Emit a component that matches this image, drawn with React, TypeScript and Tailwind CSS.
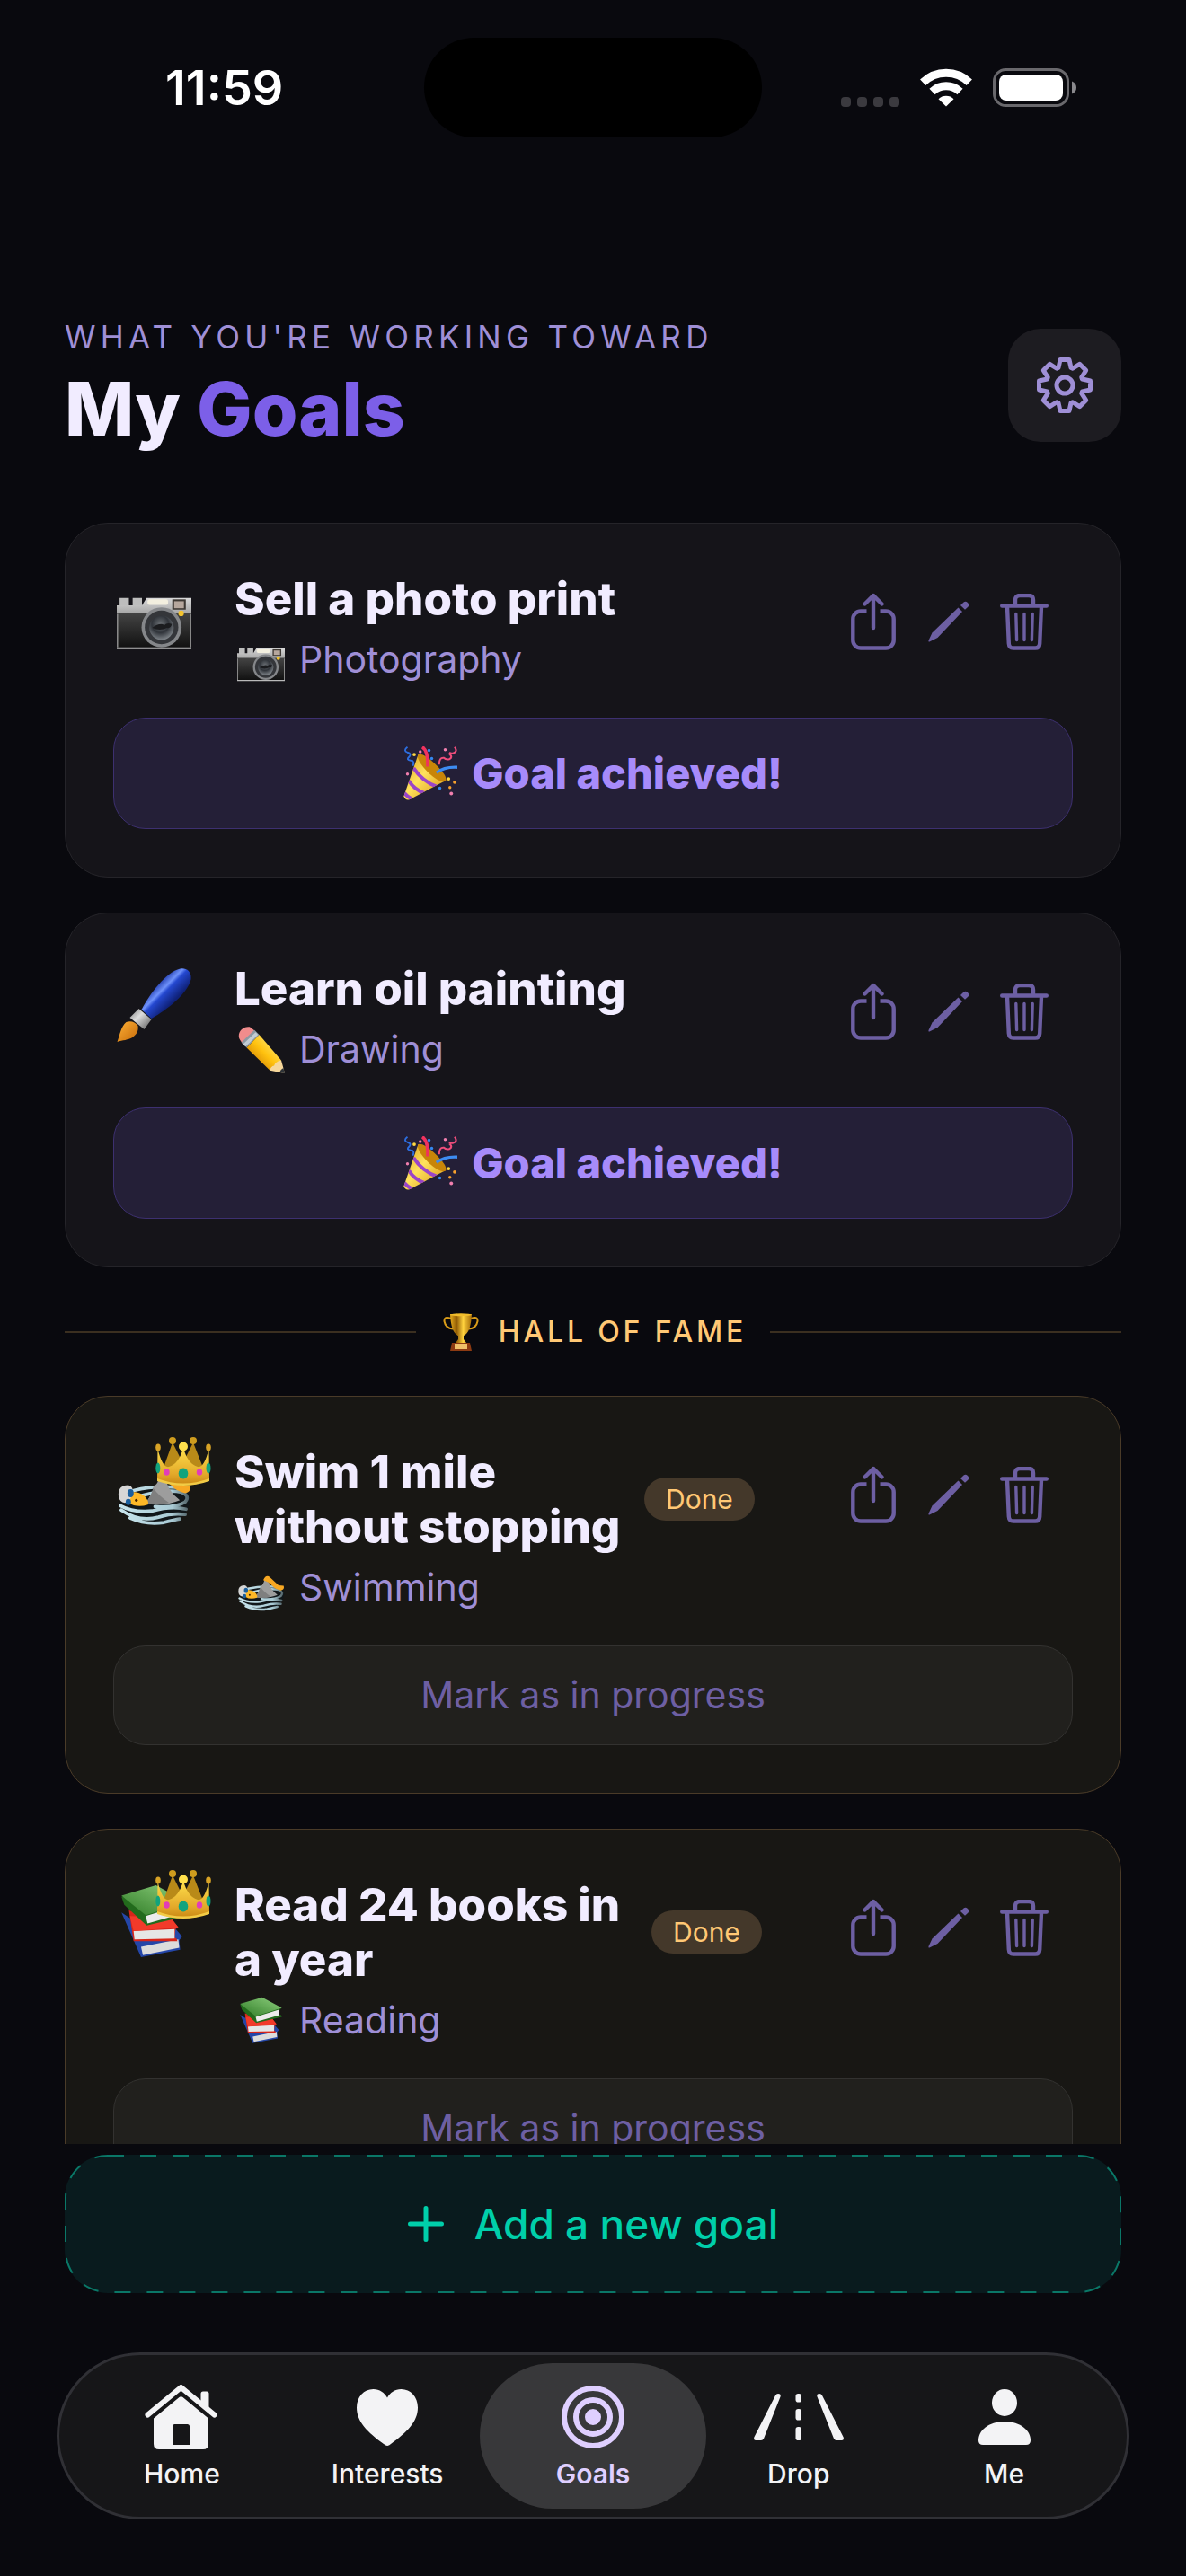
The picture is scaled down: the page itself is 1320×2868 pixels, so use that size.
import React from "react";

type IconProps = { className?: string };

const GEAR_PATH =
  Array.from({ length: 8 }, (_, k) => {
    const a = (k * Math.PI) / 4;
    return [
      [-7, -19.5],
      [-5, -28.5],
      [5, -28.5],
      [7, -19.5],
    ]
      .map(([x, y]) => {
        const px = x * Math.cos(a) - y * Math.sin(a);
        const py = x * Math.sin(a) + y * Math.cos(a);
        return `${px.toFixed(2)} ${py.toFixed(2)}`;
      })
      .join("L");
  })
    .map((p, i) => (i === 0 ? "M" : "L") + p)
    .join("") + "Z";

function GearIcon({ className }: IconProps) {
  return (
    <svg viewBox="-32 -32 64 64" className={className} fill="none" stroke="currentColor" strokeWidth="5" strokeLinejoin="round" aria-hidden="true">
      <path d={GEAR_PATH} />
      <circle r="9" />
    </svg>
  );
}

function ShareIcon({ className }: IconProps) {
  return (
    <svg viewBox="0 0 50 64" className={className} fill="none" stroke="currentColor" strokeWidth="4.4" strokeLinecap="round" strokeLinejoin="round" aria-hidden="true">
      <path d="M17.5 20.5H11a8.7 8.7 0 0 0-8.7 8.7v23.6A8.7 8.7 0 0 0 11 61.500h28a8.700 8.700 0 0 0 8.700-8.700V29.200a8.700 8.700 0 0 0-8.700-8.700h-6.500" strokeLinecap="butt" />
      <path d="M25 3v36M15.500 12.500 25 3l9.500 9.500" />
    </svg>
  );
}

function PencilIcon({ className }: IconProps) {
  return (
    <svg viewBox="0 0 46 46" className={className} fill="currentColor" aria-hidden="true">
      <path d="M33.500 7.500 38 12 10.500 41 1.500 45.500Q0 46 0.500 44L4.500 35.500Z" />
      <path d="M36 5 38.500 2.500Q41-.5 44 2q2.500 2.800 0 5L41 9.800Z" />
    </svg>
  );
}

function TrashIcon({ className }: IconProps) {
  return (
    <svg viewBox="0 0 54 63" className={className} fill="none" stroke="currentColor" strokeWidth="4.400" strokeLinecap="round" strokeLinejoin="round" aria-hidden="true">
      <path d="M2.200 13.500h49.600M17 12.500V7q0-5 5-5h10q5 0 5 5v5.500M8 14.500l1.800 41q.3 5 5 5h24.400q4.700 0 5-5L46 14.500" />
      <path d="M17.800 22.500l.8 29M27 22.500v29M36.200 22.500l-.8 29" strokeWidth="3.400" />
    </svg>
  );
}

function CameraEmoji({ className }: IconProps) {
  return (
    <svg viewBox="0 0 80 80" className={className} aria-hidden="true">
      <defs>
        <linearGradient id="cam-top" x1="0" y1="0" x2="0" y2="1">
          <stop offset="0" stopColor="#d9d9d9" />
          <stop offset="1" stopColor="#a2a2a2" />
        </linearGradient>
        <linearGradient id="cam-body" x1="0" y1="0" x2="0" y2="1">
          <stop offset="0" stopColor="#444" />
          <stop offset="1" stopColor="#111" />
        </linearGradient>
        <radialGradient id="cam-lens" cx=".45" cy=".35" r=".7">
          <stop offset="0" stopColor="#6b7075" />
          <stop offset=".5" stopColor="#30343a" />
          <stop offset="1" stopColor="#8b9196" />
        </radialGradient>
      </defs>
      <path d="M3 21h10v9H3zM17 21h10v9H17z" fill="#bdbdbd" />
      <path d="M0 29h27l5-8h48v18H0z" fill="url(#cam-top)" />
      <path d="M0 37h80v37H0z" fill="url(#cam-body)" />
      <path d="M0 74h80v2H0z" fill="#b9b9b9" />
      <path d="M0 38h1.500v36H0zM78.500 38H80v36h-1.500z" fill="#888" />
      <rect x="33" y="22.500" width="22" height="6" rx="2" fill="#f3efdf" />
      <rect x="59.500" y="22.500" width="14.500" height="11" fill="#3d3833" />
      <rect x="61.500" y="24.500" width="10.500" height="7.500" fill="#b6a79d" />
      <circle cx="48" cy="52.500" r="21.500" fill="#85878a" />
      <circle cx="48" cy="52.500" r="18" fill="#34363a" />
      <circle cx="48" cy="53" r="13" fill="url(#cam-lens)" />
      <path d="M38 53q8-6 13-3 3-3 8-1-1 5-5 4-8 4-16 0z" fill="#1b1c1f" />
      <circle cx="69" cy="37.500" r="3" fill="#f3c32e" />
    </svg>
  );
}

function BrushEmoji({ className }: IconProps) {
  return (
    <svg viewBox="0 0 82 83" className={className} aria-hidden="true">
      <defs>
        <linearGradient id="br-handle" x1=".3" y1=".3" x2=".65" y2=".65">
          <stop offset="0" stopColor="#1a35a8" />
          <stop offset=".35" stopColor="#6f92fb" />
          <stop offset=".5" stopColor="#2448d0" />
          <stop offset="1" stopColor="#0f2178" />
        </linearGradient>
        <linearGradient id="br-metal" x1="0" y1="0" x2="1" y2="1">
          <stop offset="0" stopColor="#777" />
          <stop offset=".4" stopColor="#ddd" />
          <stop offset="1" stopColor="#555" />
        </linearGradient>
        <linearGradient id="br-tip" x1="0" y1="0" x2="1" y2="1">
          <stop offset="0" stopColor="#ffb035" />
          <stop offset="1" stopColor="#c46a0a" />
        </linearGradient>
      </defs>
      <path d="M27 46C36 29 54 4 70 .5c8-1 13 4 12 12C78 28 56 46 38 56Z" fill="url(#br-handle)" />
      <path d="M24 45 38 57 30 68 14 55Z" fill="url(#br-metal)" />
      <path d="M0 82c3-8 4-17 10-22 5-2 10 0 13 4 1 6-2 10-6 13-5 3-11 3-17 5Z" fill="url(#br-tip)" />
    </svg>
  );
}

function PencilEmoji({ className }: IconProps) {
  return (
    <svg viewBox="0 0 80 80" className={className} aria-hidden="true">
      <defs>
        <linearGradient id="pc-body" x1=".7" y1=".3" x2=".3" y2=".7">
          <stop offset="0" stopColor="#ffd94a" />
          <stop offset=".5" stopColor="#ffc20f" />
          <stop offset="1" stopColor="#e39a08" />
        </linearGradient>
      </defs>
      <path d="M5 24C-2 14 8 0 21 2l8 6L9 30Z" fill="#f08c8c" />
      <path d="M29 7 37 15 16 37 7 28Z" fill="#8d99a3" />
      <path d="M31 11 35 15 14 35 10 31Z" fill="#c3ccd3" />
      <path d="M37 15 74 58 55 75 16 37Z" fill="url(#pc-body)" />
      <path d="M74 58 80 80 55 75Q56 68 62 67 64 60 74 58Z" fill="#f6d79b" />
      <path d="M77.500 71 80 80 71 78.500Q73 73 77.500 71Z" fill="#2e3338" />
    </svg>
  );
}

function PartyEmoji({ className }: IconProps) {
  return (
    <svg viewBox="0 0 80 80" className={className} aria-hidden="true">
      <defs>
        <linearGradient id="pt-cone" x1="0" y1="0" x2="1" y2="1">
          <stop offset="0" stopColor="#d79a12" />
          <stop offset=".45" stopColor="#ffe25e" />
          <stop offset="1" stopColor="#d48f0c" />
        </linearGradient>
        <clipPath id="pt-clip">
          <path d="M22 12 62 51 9 79Q3 81 .5 74Z" />
        </clipPath>
      </defs>
      <path d="M22 12 62 51 9 79Q3 81 .5 74Z" fill="url(#pt-cone)" />
      <g clipPath="url(#pt-clip)" stroke="#9b45c9" strokeWidth="5.500" fill="none">
        <path d="M15 32Q28 52 50 60M8 51Q16 64 32 70M0 68Q6 75 14 79" />
      </g>
      <path d="M22 12Q30 10 46 25 66 44 63 51 56 56 38 40 18 20 22 12Z" fill="#c88508" />
      <path d="M28 1q9 6 8 29" stroke="#f0325f" strokeWidth="5" fill="none" />
      <path d="M49 39q12-9 31-8" stroke="#3d8cf0" strokeWidth="4.500" fill="none" />
      <path d="M6 1q-7 5 0 8 7 2 2 7-4 4 3 5 6 0 3 8" stroke="#2d6ee0" strokeWidth="2.500" fill="none" />
      <path d="M76 1q5 7-2 9-4 1-6-1M68 11q6 5 0 8-5 1-8-2-7-1-7 10" stroke="#ef4d7b" strokeWidth="2.800" fill="none" />
      <g fill="#ffd840"><circle cx="16" cy="12" r="2.500" /><circle cx="67" cy="48" r="2.500" /></g>
      <g fill="#3486ef"><circle cx="38" cy="6" r="2.300" /><circle cx="42" cy="18" r="2.300" /><circle cx="54" cy="62" r="2.300" /></g>
      <g fill="#f8a12d"><circle cx="76" cy="53" r="2.500" /><circle cx="69" cy="61" r="2.200" /></g>
      <g fill="#f17fae"><circle cx="25" cy="8" r="2.300" /><circle cx="62" cy="5" r="2.300" /><circle cx="71" cy="70" r="2.600" /><circle cx="6" cy="41" r="2.200" /></g>
    </svg>
  );
}

function CrownEmoji({ className }: IconProps) {
  return (
    <svg viewBox="0 0 62 54" className={className} aria-hidden="true">
      <defs>
        <linearGradient id="cr-front" x1="0" y1="0" x2="0" y2="1">
          <stop offset="0" stopColor="#ffe04c" />
          <stop offset=".7" stopColor="#e3a92a" />
          <stop offset="1" stopColor="#c98713" />
        </linearGradient>
      </defs>
      <g fill="#b98a18">
        <path d="M19 6 33 34H9ZM42 6 53 34H28Z" />
      </g>
      <g fill="#cf9d1e"><circle cx="19" cy="4" r="4" /><circle cx="42" cy="4" r="4" /></g>
      <path d="M2.500 13Q8 35 15 33 26 30 31 12 36 30 47 33 54 35 59.500 13L60 48Q31 59 2 48Z" fill="url(#cr-front)" />
      <path d="M2 46Q31 57 60 46V49Q31 59 2 49Z" fill="#f2cb45" />
      <circle cx="31" cy="10.500" r="5" fill="#ffe04c" />
      <ellipse cx="3" cy="11.500" rx="2.800" ry="4" fill="#d9a426" />
      <ellipse cx="59" cy="11.500" rx="2.800" ry="4" fill="#d9a426" />
      <g fill="#12a37d"><ellipse cx="31" cy="40.500" rx="5.300" ry="6" /><ellipse cx="2.800" cy="34.500" rx="2.500" ry="6" /><ellipse cx="59" cy="34.500" rx="2.500" ry="6" /></g>
      <g fill="#e23db9"><ellipse cx="12.500" cy="39" rx="3.200" ry="3.800" /><ellipse cx="49" cy="39" rx="3.200" ry="3.800" /></g>
    </svg>
  );
}

function SwimmerEmoji({ className }: IconProps) {
  return (
    <svg viewBox="0 0 82 84" className={className} aria-hidden="true">
      <defs>
        <linearGradient id="sw-water" x1="0" y1="0" x2="82" y2="0" gradientUnits="userSpaceOnUse">
          <stop offset="0" stopColor="#c9e6ee" />
          <stop offset=".75" stopColor="#a9cad4" />
          <stop offset="1" stopColor="#46565b" />
        </linearGradient>
      </defs>
      <path d="M2 58Q14 42 46 40 76 38 81 48 84 62 72 74 52 87 34 81 8 74 2 58Z" fill="#11171a" />
      <g fill="none" stroke="url(#sw-water)" strokeWidth="3.800" strokeLinecap="round">
        <path d="M18 44q28-7 60-2M26 50q30-8 46-4 10 4 4 11-12 7-34 5" />
        <path d="M3 61q14 8 36 6 22-6 38-2M4 66q20 14 42 8 16-5 30-3M14 75q18 8 38 5 12-3 18-4" />
      </g>
      <path d="M31 59Q40 46 40 40 46 36 47 28L55 33Q56 44 70 55 54 62 31 59Z" fill="#9d9d9d" />
      <path d="M31 59Q40 46 40 41 46 50 58 58 44 61 31 59Z" fill="#7f7f7f" />
      <path d="M45 29Q50 18 57 24L72 38 81 39Q83 46 76 47 66 45 60 38L54 33Z" fill="#f7a823" />
      <path d="M10 48Q20 43 30 50 36 56 34 60 22 64 12 58Z" fill="#fdb827" />
      <path d="M1 50Q0 38 12 38 19 40 16 48 14 58 8 58 2 57 1 50Z" fill="#d6d6d6" />
      <ellipse cx="14.500" cy="47" rx="3.500" ry="4.500" fill="#1a5f9e" />
      <ellipse cx="12" cy="57" rx="3" ry="3.500" fill="#1a5f9e" />
      <circle cx="21" cy="55" r="1.600" fill="#432300" />
    </svg>
  );
}

function BooksEmoji({ className }: IconProps) {
  return (
    <svg viewBox="0 0 80 80" className={className} aria-hidden="true">
      <defs>
        <linearGradient id="bk-green" x1="0" y1="1" x2="1" y2="0">
          <stop offset="0" stopColor="#2f7c26" />
          <stop offset="1" stopColor="#8fd07f" />
        </linearGradient>
      </defs>
      <path d="M5 30 26 78 68 70 67 60 70 56 60 44 20 40Z" fill="#2446a8" />
      <path d="M26 67 66 59 67 68 28 76Z" fill="#dcdcdc" />
      <path d="M13 28 18 61 65 61 64 58 62 57 63 48 66 46 58 36Z" fill="#d8261a" />
      <path d="M18 50 62 48 62 58 19 59Z" fill="#e6e6e6" />
      <path d="M14 34 18 50 66 46 58 36Z" fill="#f23a2a" />
      <path d="M5 13 8 22 32 44 75 34 74 31 70 30 70 23 74 20Z" fill="#226b1c" />
      <path d="M31 34 70 22 71 31 33 42Z" fill="#ececec" />
      <path d="M5 12 42 1 75 19 31 33Z" fill="url(#bk-green)" />
    </svg>
  );
}

function TrophyEmoji({ className }: IconProps) {
  return (
    <svg viewBox="0 0 40 42" className={className} aria-hidden="true">
      <defs>
        <linearGradient id="tr-cup" x1="0" y1="0" x2="1" y2="0">
          <stop offset="0" stopColor="#e9ae1d" />
          <stop offset=".3" stopColor="#8f5a05" />
          <stop offset=".6" stopColor="#ffd23d" />
          <stop offset="1" stopColor="#a66c08" />
        </linearGradient>
      </defs>
      <path d="M9 6Q1 3 1.500 9 3 17 11 17.500M31 6Q39 3 38.500 9 37 17 29 17.500" stroke="#d99c19" strokeWidth="2" fill="none" />
      <path d="M8 1H32Q31 22 23 25V29L26 33H14L17 29V25Q9 22 8 1Z" fill="url(#tr-cup)" />
      <ellipse cx="20" cy="1.800" rx="12" ry="1.500" fill="#f2bd2c" />
      <path d="M10 33H30L32 42H8Z" fill="#8c3a12" />
      <path d="M13 34H27V40H13Z" fill="#f0c06a" />
    </svg>
  );
}

function HomeIcon({ className }: IconProps) {
  return (
    <svg viewBox="0 0 82 72" className={className} fill="currentColor" aria-hidden="true">
      <path d="M3.500 33.500 40.500 3 77.500 33.500" fill="none" stroke="currentColor" strokeWidth="6" strokeLinecap="round" strokeLinejoin="round" />
      <path d="M62.500 10q0-2.500 2.500-2.500h4q2.500 0 2.500 2.500v18l-9-7.500Z" />
      <path fillRule="evenodd" d="M38.500 14Q40.500 12.500 42.500 14L71 37.500V66q0 6-6 6H16q-6 0-6-6V37.500ZM33.500 44q-2.500 0-2.500 2.500V67h19V46.500Q50 44 47.500 44Z" />
    </svg>
  );
}

function HeartIcon({ className }: IconProps) {
  return (
    <svg viewBox="0 0 68 63" className={className} fill="currentColor" aria-hidden="true">
      <path d="M34 63Q32.500 63 30 61C12 48 0 36 0 20.500 0 8.500 8 0 18.500 0 25.500 0 31 4 34 9.500 37 4 42.500 0 49.500 0 60 0 68 8.500 68 20.500 68 36 56 48 38 61 35.500 63 34 63 34 63Z" />
    </svg>
  );
}

function TargetIcon({ className }: IconProps) {
  return (
    <svg viewBox="0 0 70 70" className={className} fill="none" stroke="currentColor" strokeWidth="6" aria-hidden="true">
      <circle cx="35" cy="35" r="32" />
      <circle cx="35" cy="35" r="19" />
      <circle cx="35" cy="35" r="9" fill="currentColor" stroke="none" />
    </svg>
  );
}

function RoadIcon({ className }: IconProps) {
  return (
    <svg viewBox="0 0 100 52" className={className} fill="currentColor" aria-hidden="true">
      <path d="M24 2Q25 0 27 0 30.500 0 29.500 3.500L11 50Q10 52 8 52H2Q-.5 52 .3 48.500ZM76 2Q75 0 73 0 69.500 0 70.500 3.500L89 50Q90 52 92 52H98Q100.500 52 99.700 48.500Z" />
      <rect x="46.500" y="0" width="6.500" height="9.500" rx="2.800" />
      <rect x="46.500" y="17" width="6.500" height="12.500" rx="2.800" />
      <rect x="46.500" y="37" width="6.500" height="15" rx="2.800" />
    </svg>
  );
}

function PersonIcon({ className }: IconProps) {
  return (
    <svg viewBox="0 0 58 62" className={className} fill="currentColor" aria-hidden="true">
      <ellipse cx="29" cy="15" rx="14" ry="15" />
      <path d="M0 57C0 46 11 36 29 36S58 46 58 57Q58 62 53 62H5Q0 62 0 57Z" />
    </svg>
  );
}

function WifiIcon({ className }: IconProps) {
  return (
    <svg viewBox="0 0 58 43" className={className} fill="none" stroke="white" aria-hidden="true">
      <path d="M3.200 15.700A37 37 0 0 1 54.800 15.700" strokeWidth="9" />
      <path d="M13.500 26A22.500 22.500 0 0 1 44.500 26" strokeWidth="9" />
      <path d="M20.500 34.200A12.500 12.500 0 0 1 37.500 34.200L29 42.500Z" fill="white" stroke="none" />
    </svg>
  );
}

function BatteryIcon({ className }: IconProps) {
  return (
    <svg viewBox="0 0 93 43" className={className} aria-hidden="true">
      <rect x="1.500" y="1.500" width="82" height="40" rx="13" fill="none" stroke="#69686c" strokeWidth="3" />
      <rect x="7" y="7" width="71" height="29" rx="8" fill="white" />
      <path d="M88 14.500Q93 16.500 93 21.500T88 28.500Z" fill="#8a898d" />
    </svg>
  );
}

function StatusBar() {
  return (
    <div className="grid h-[195px] shrink-0 grid-cols-[1fr_376px_1fr] items-center">
      <time className="pl-[184px] text-[54px] leading-[60px] font-semibold text-white">11:59</time>
      <div className="h-[111px] rounded-full bg-black" />
      <div className="flex items-end justify-end gap-[23px] pr-[122px]">
        <div className="flex gap-[7px]">
          {[0, 1, 2, 3].map((i) => (
            <span key={i} className="size-[11px] rounded-[4px] bg-[#3b3a3f]" />
          ))}
        </div>
        <WifiIcon className="h-[43px] w-[58px]" />
        <BatteryIcon className="h-[43px] w-[93px]" />
      </div>
    </div>
  );
}

type Goal = {
  title: string;
  titleWidth?: string;
  category: string;
  Emoji: React.FC<IconProps>;
  CategoryEmoji: React.FC<IconProps>;
  done?: boolean;
};

const ACTIVE_GOALS: Goal[] = [
  { title: "Sell a photo print", category: "Photography", Emoji: CameraEmoji, CategoryEmoji: CameraEmoji },
  { title: "Learn oil painting", category: "Drawing", Emoji: BrushEmoji, CategoryEmoji: PencilEmoji },
];

const FAME_GOALS: Goal[] = [
  { title: "Swim 1 mile without stopping", titleWidth: "w-[438px]", category: "Swimming", Emoji: SwimmerEmoji, CategoryEmoji: SwimmerEmoji, done: true },
  { title: "Read 24 books in a year", titleWidth: "w-[446px]", category: "Reading", Emoji: BooksEmoji, CategoryEmoji: BooksEmoji, done: true },
];

function GoalCard({ goal }: { goal: Goal }) {
  const { title, titleWidth, category, Emoji, CategoryEmoji, done } = goal;
  return (
    <article className={`shrink-0 rounded-[48px] border p-[53px] ${done ? "border-[#4a3b28] bg-[#181714]" : "border-[#252429] bg-[#151419]"}`}>
      <div className="flex items-start">
        <div className="relative mt-2 ml-1 w-[131px] shrink-0">
          <Emoji className="size-[83px]" />
          {done && <CrownEmoji className="absolute -top-4 left-[43px] h-[54px] w-[62px]" />}
        </div>
        <div className="min-w-0 flex-1">
          <div className="flex items-center gap-[18px]">
            <h3 className={`shrink-0 text-[51px] leading-[61px] font-extrabold text-[#f1ecff] ${titleWidth ?? ""}`}>{title}</h3>
            {done && (
              <span className="rounded-full bg-[#44382a] px-6 text-[30px] leading-[48px] text-[#ffc875]">Done</span>
            )}
          </div>
          <p className="mt-3 flex h-[50px] items-center gap-4 text-[41px] leading-[50px] text-[#9f8fd6]">
            <CategoryEmoji className="ml-[3px] size-[53px]" />
            {category}
          </p>
        </div>
        <div className="mt-[14px] mr-3 flex shrink-0 text-[#6d5fa3]">
          <button type="button" aria-label={`Share ${title}`} className="grid size-[84px] place-items-center">
            <ShareIcon className="h-16 w-[50px]" />
          </button>
          <button type="button" aria-label={`Edit ${title}`} className="grid size-[84px] place-items-center">
            <PencilIcon className="size-[46px]" />
          </button>
          <button type="button" aria-label={`Delete ${title}`} className="grid size-[84px] place-items-center">
            <TrashIcon className="h-[63px] w-[54px]" />
          </button>
        </div>
      </div>
      {done ? (
        <button type="button" className="mt-10 block h-[111px] w-full rounded-[36px] border border-[#333230] bg-[#21201d] text-[41px] text-[#6d5fa3]">
          Mark as in progress
        </button>
      ) : (
        <div className="mt-10 flex h-[124px] items-center justify-center gap-4 rounded-[36px] border border-[#3d3070] bg-[#241f37] text-[47px] font-extrabold text-[#a78bfa]">
          <PartyEmoji className="size-[60px]" />
          Goal achieved!
        </div>
      )}
    </article>
  );
}

const TABS: { label: string; icon: React.ReactNode; active?: boolean }[] = [
  { label: "Home", icon: <HomeIcon className="h-[72px] w-[82px]" /> },
  { label: "Interests", icon: <HeartIcon className="h-[63px] w-[68px]" /> },
  { label: "Goals", icon: <TargetIcon className="size-[70px]" />, active: true },
  { label: "Drop", icon: <RoadIcon className="h-[52px] w-[100px]" /> },
  { label: "Me", icon: <PersonIcon className="h-[62px] w-[58px]" /> },
];

function TabBar() {
  return (
    <nav className="mx-[63px] mt-[66px] mb-[63px] flex h-[186px] shrink-0 items-center rounded-full border-[3px] border-[#303035] bg-[#161618] px-[22px]">
      {TABS.map(({ label, icon, active }) => (
        <a key={label} href={`#${label.toLowerCase()}`} aria-current={active ? "page" : undefined} className="block flex-1">
          <span
            className={`-mx-3 flex h-[162px] flex-col items-center rounded-full pt-6 ${active ? "bg-[#38383a] font-semibold text-[#dfcfff]" : "font-medium text-[#f3f3f5]"}`}
          >
            <span className="flex h-[72px] items-center">{icon}</span>
            <span className="mt-[9px] text-[30px] leading-9">{label}</span>
          </span>
        </a>
      ))}
    </nav>
  );
}

export default function App() {
  return (
    <div className="flex h-screen flex-col overflow-hidden bg-[#09090e] font-['Inter',sans-serif]">
      <StatusBar />
      <header className="mt-[159px] flex shrink-0 items-center justify-between px-[72px]">
        <div>
          <p className="text-[35px] leading-[42px] tracking-[0.15em] text-[#9f8fd6] uppercase">What you're working toward</p>
          <h1 className="mt-3 text-[82px] leading-[96px] font-extrabold text-[#f1ecff]">
            My <span className="text-[#7c5fe8]">Goals</span>
          </h1>
        </div>
        <button type="button" aria-label="Settings" className="grid size-[126px] place-items-center rounded-[36px] bg-[#1d1c21] text-[#9f8fd6]">
          <GearIcon className="size-16" />
        </button>
      </header>
      <main className="mt-[78px] flex min-h-0 flex-1 flex-col gap-[39px] overflow-hidden px-[72px]">
        {ACTIVE_GOALS.map((g) => (
          <GoalCard key={g.title} goal={g} />
        ))}
        <div className="flex h-[65px] shrink-0 items-center">
          <span className="h-[2px] flex-1 bg-[#3b2f20]" />
          <TrophyEmoji className="ml-[30px] h-[42px] w-10" />
          <h2 className="mr-[26px] ml-[22px] text-[32px] font-medium tracking-[0.12em] text-[#ffc875] uppercase">Hall of Fame</h2>
          <span className="h-[2px] flex-1 bg-[#3b2f20]" />
        </div>
        {FAME_GOALS.map((g) => (
          <GoalCard key={g.title} goal={g} />
        ))}
      </main>
      <button
        type="button"
        className="relative mx-[72px] mt-3 flex h-[154px] shrink-0 items-center justify-center gap-[34px] rounded-[48px] bg-[#091b1e] text-[46px] font-medium text-[#00cfaa]"
      >
        <svg className="absolute inset-0 size-full" fill="none" aria-hidden="true">
          <rect x="1" y="1" rx="47" className="h-[calc(100%-2px)] w-[calc(100%-2px)]" stroke="#0a7767" strokeWidth="2" strokeDasharray="18 18" />
        </svg>
        <svg viewBox="0 0 40 40" className="size-10" stroke="currentColor" strokeWidth="5" strokeLinecap="round" aria-hidden="true">
          <path d="M20 2.500v35M2.500 20h35" />
        </svg>
        Add a new goal
      </button>
      <TabBar />
    </div>
  );
}
